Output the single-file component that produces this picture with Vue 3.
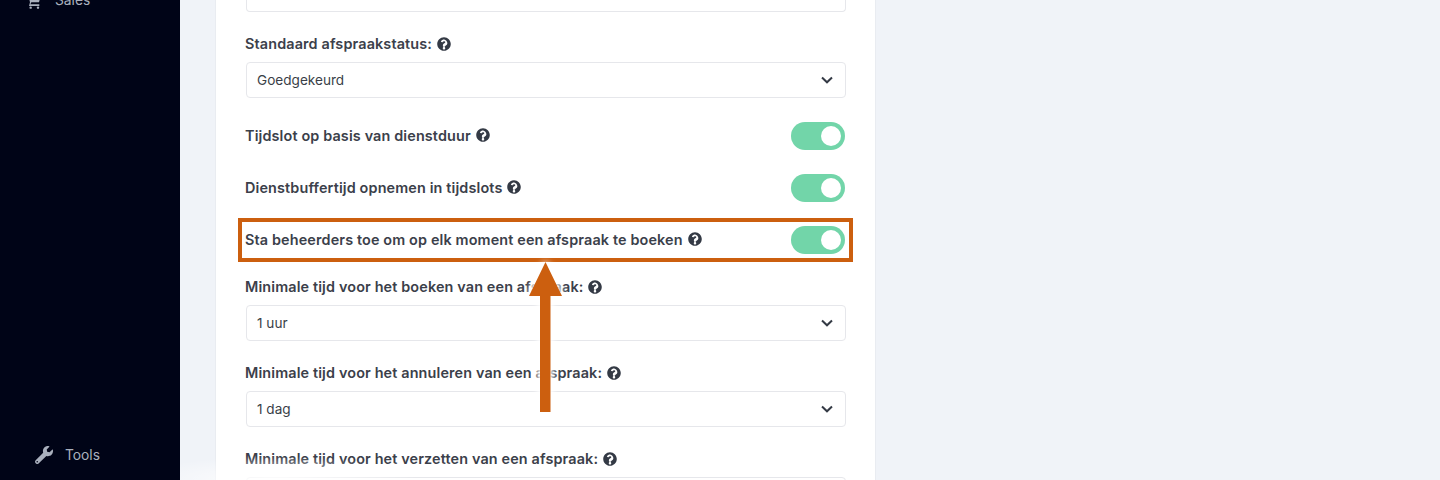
<script setup>
const afterToggles = [
  { label: 'Minimale tijd voor het boeken van een afspraak:', value: '1 uur' },
  { label: 'Minimale tijd voor het annuleren van een afspraak:', value: '1 dag' },
  { label: 'Minimale tijd voor het verzetten van een afspraak:', value: '' }
]
const toggles = [
  'Tijdslot op basis van dienstduur',
  'Dienstbuffertijd opnemen in tijdslots',
  'Sta beheerders toe om op elk moment een afspraak te boeken'
]
const helpPath = 'M504 256c0 137-111 248-248 248S8 393 8 256 119 8 256 8s248 111 248 248zM262.700 90c-54.500 0-89.300 23-116.500 63.800-3.500 5.300-2.400 12.400 2.700 16.300l34.700 26.300c5.200 3.900 12.600 3 16.700-2.100 17.900-22.700 30.100-35.800 57.300-35.800 20.400 0 45.700 13.100 45.700 32.900 0 15-12.400 22.700-32.500 34-23.500 13.200-54.600 29.600-54.600 70.700V340c0 6.600 5.400 12 12 12h56c6.600 0 12-5.400 12-12v-4.600c0-28.400 83-29.600 83-106.400 0-57.900-60-138-116.500-139zM256 368c-25.400 0-46 20.600-46 46s20.600 46 46 46 46-20.600 46-46-20.600-46-46-46z'
</script>

<template>
  <div class="page">
    <aside class="sidebar">
      <div class="nav-item nav-sales">
        <svg class="cart" viewBox="0 0 24 24" aria-hidden="true">
          <path d="M1 2h4l1 3h16l-2.500 9H8L6.600 17H20v2.500H4.500L6 14 3.800 4.500H1z" />
          <circle cx="7" cy="22" r="1.800" />
          <circle cx="18" cy="22" r="1.800" />
        </svg>
        <span>Sales</span>
      </div>
      <div class="nav-item nav-tools">
        <svg class="wrench" viewBox="0 0 512 512" aria-hidden="true">
          <path d="M507.700 109.100c-2.200-9-13.500-12.100-20.100-5.500l-74.400 74.400-67.900-11.300-11.300-67.900 74.400-74.400c6.600-6.600 3.400-17.900-5.700-20.200-47.400-11.700-99.500 1-136.500 38-39.600 39.600-50.600 96.900-33.600 147L19.300 403.500c-25 25-25 65.500 0 90.500 25 25 65.500 25 90.500 0l213.100-213.100c50.200 16.800 107.500 5.800 147.200-33.900 37.100-37 49.800-89.200 37.600-136.900zM64 472c-13.300 0-24-10.700-24-24 0-13.300 10.700-24 24-24s24 10.700 24 24c0 13.300-10.700 24-24 24z" />
        </svg>
        <span>Tools</span>
      </div>
    </aside>

    <main class="content">
      <section class="card">
        <div class="select select-cut"></div>

        <div class="field field-status">
          <label class="label">
            Standaard afspraakstatus:
            <svg class="help" viewBox="0 0 512 512"><path :d="helpPath" fill-rule="evenodd" /></svg>
          </label>
          <div class="select">
            <span>Goedgekeurd</span>
            <svg class="chevron" viewBox="0 0 12 8"><path d="M1 1.500 6 6.300l5-4.800" /></svg>
          </div>
        </div>

        <div class="toggles">
          <div v-for="t in toggles" :key="t" class="toggle-row">
            <span class="label">
              {{ t }}
              <svg class="help" viewBox="0 0 512 512"><path :d="helpPath" fill-rule="evenodd" /></svg>
            </span>
            <span class="toggle"><span class="knob"></span></span>
          </div>
        </div>

        <div class="fields">
          <div v-for="f in afterToggles" :key="f.label" class="field">
            <label class="label">
              {{ f.label }}
              <svg class="help" viewBox="0 0 512 512"><path :d="helpPath" fill-rule="evenodd" /></svg>
            </label>
            <div class="select">
              <span>{{ f.value }}</span>
              <svg class="chevron" viewBox="0 0 12 8"><path d="M1 1.500 6 6.300l5-4.800" /></svg>
            </div>
          </div>
        </div>
      </section>
    </main>

    <div class="highlight"></div>
    <svg class="arrow" viewBox="0 0 33 150" aria-hidden="true">
      <path d="M16.500 0 33 34H21.500v116H11V34H0z" />
    </svg>
    <div class="corner-glow"></div>
  </div>
</template>

<style scoped>
.page {
  position: relative;
  display: flex;
  width: 1440px;
  height: 480px;
  overflow: hidden;
  background: #f0f3f8;
  font-family: Inter, "Noto Sans", sans-serif;
}
.sidebar {
  position: relative;
  flex: 0 0 180px;
  background: #000417;
  color: #a9b0bd;
  font-size: 14px;
}
.nav-item {
  position: absolute;
  display: flex;
  align-items: center;
}
.nav-sales {
  left: 26px;
  top: -10px;
  gap: 13px;
  font-size: 13.8px;
}
.nav-tools {
  left: 35px;
  top: 446px;
  gap: 12px;
  font-size: 13.8px;
}
.cart {
  width: 16px;
  height: 16px;
  margin-top: 3px;
  fill: #a9b0bd;
}
.wrench {
  width: 18px;
  height: 18px;
  fill: #a9b0bd;
}
.content {
  flex: 1;
  padding-left: 35px;
}
.card {
  box-sizing: border-box;
  width: 661px;
  height: 480px;
  padding: 0 29px 0 29px;
  background: #fff;
  border-left: 1px solid #e9ecf1;
  border-right: 1px solid #e9ecf1;
}
.select {
  box-sizing: border-box;
  display: flex;
  align-items: center;
  justify-content: space-between;
  width: 600px;
  height: 36px;
  margin-left: 1px;
  padding: 0 12px 0 10px;
  border: 1px solid #e6e7eb;
  border-radius: 4px;
  background: #fff;
  color: #3a3f48;
  font-size: 13.6px;
}
.select-cut {
  height: 12px;
  border-top: 0;
  border-radius: 0 0 4px 4px;
}
.field-status {
  margin-top: 23px;
}
.label {
  display: flex;
  align-items: center;
  gap: 5px;
  height: 17px;
  margin-bottom: 10px;
  color: #3b404a;
  font-size: 14.4px;
  font-weight: 600;
  letter-spacing: 0.14px;
  white-space: nowrap;
}
.help {
  width: 14px;
  height: 14px;
  fill: #343a45;
}
.chevron {
  width: 12px;
  height: 8px;
  fill: none;
  stroke: #343a45;
  stroke-width: 2;
}
.toggles {
  display: flex;
  flex-direction: column;
  gap: 24px;
  margin-top: 24px;
}
.toggle-row {
  display: flex;
  align-items: center;
  justify-content: space-between;
  height: 28px;
  margin-right: 1px;
}
.toggle-row .label {
  margin: -2px 0 0;
}
.toggle {
  display: flex;
  align-items: center;
  justify-content: flex-end;
  box-sizing: border-box;
  width: 54px;
  height: 28px;
  padding-right: 4px;
  border-radius: 14px;
  background: #72d5a9;
}
.knob {
  width: 20px;
  height: 20px;
  border-radius: 50%;
  background: #fff;
}
.fields {
  display: flex;
  flex-direction: column;
  gap: 23px;
  margin-top: 24px;
}
.highlight {
  position: absolute;
  left: 238px;
  top: 218px;
  box-sizing: border-box;
  width: 615px;
  height: 44px;
  border: 4px solid #cc5f0f;
}
.arrow {
  position: absolute;
  left: 529px;
  top: 262px;
  width: 33px;
  height: 150px;
  fill: #cc5f0f;
  filter: drop-shadow(0 0 3px #fff) drop-shadow(0 0 3px #fff);
}
.corner-glow {
  position: absolute;
  left: 180px;
  bottom: 0;
  width: 240px;
  height: 24px;
  background: radial-gradient(ellipse at 40% 100%, rgba(255, 255, 255, 0.9), rgba(255, 255, 255, 0) 70%);
  pointer-events: none;
}
</style>
